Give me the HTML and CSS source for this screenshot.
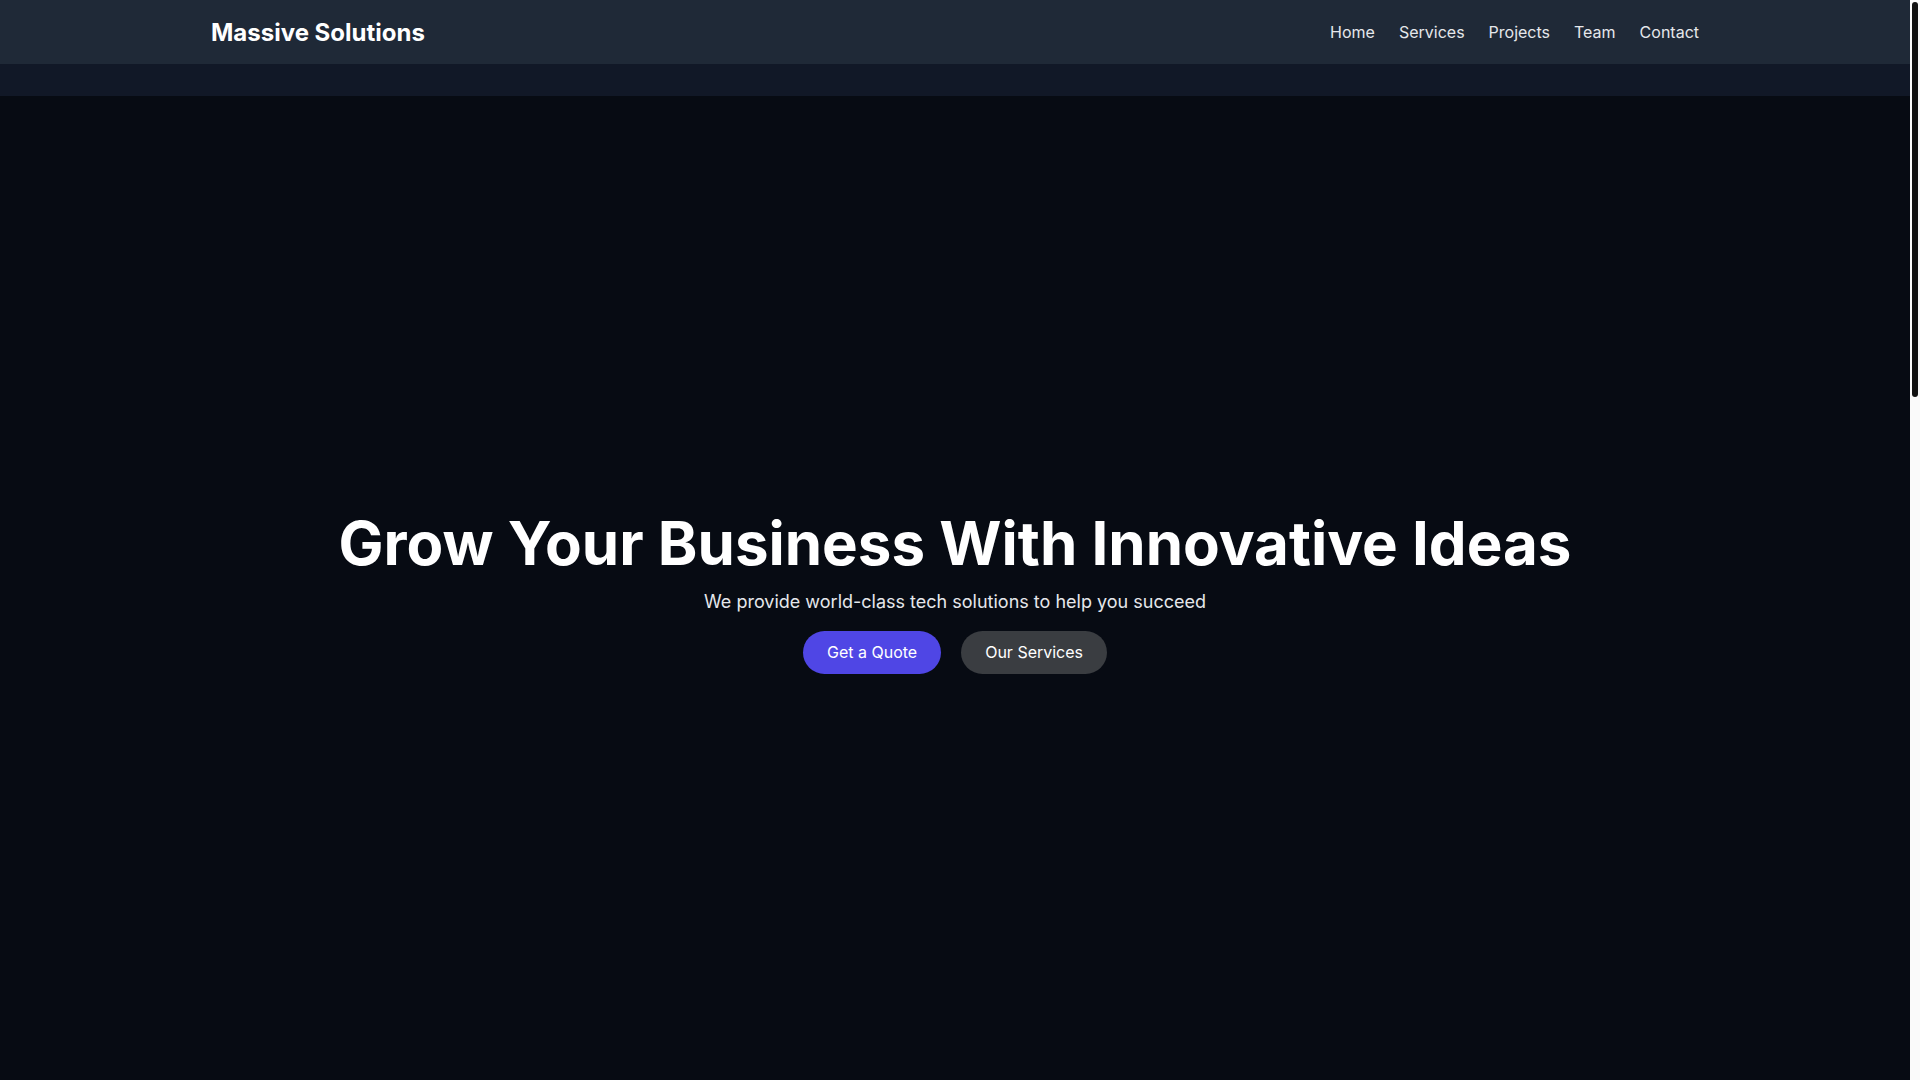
FILE: index.html
```html
<!DOCTYPE html>
<html lang="en">
<head>
<meta charset="utf-8">
<title>Massive Solutions</title>
<link rel="stylesheet" href="styles.css">
</head>
<body>
<div class="page">
  <header class="navbar">
    <div class="container nav-inner">
      <a class="brand" href="#">Massive Solutions</a>
      <nav class="nav-links">
        <a href="#">Home</a>
        <a href="#">Services</a>
        <a href="#">Projects</a>
        <a href="#">Team</a>
        <a href="#">Contact</a>
      </nav>
    </div>
  </header>
  <div class="band"></div>
  <main>
    <section class="hero">
      <h1 class="hero-title">Grow Your Business With Innovative Ideas</h1>
      <p class="hero-sub">We provide world-class tech solutions to help you succeed</p>
      <div class="hero-actions">
        <a class="btn btn-primary" href="#">Get a Quote</a>
        <a class="btn btn-secondary" href="#">Our Services</a>
      </div>
    </section>
    <section class="more"></section>
  </main>
</div>
<div class="scrollbar" aria-hidden="true"><div class="scrollbar-thumb"></div></div>
</body>
</html>
```

FILE: styles.css
```css
html, body {
  margin: 0;
  padding: 0;
}
body {
  background: #070b13;
  font-family: Inter, "Noto Sans", sans-serif;
  color: #fff;
  display: flex;
  align-items: flex-start;
}
.page {
  flex: 1;
  min-width: 0;
  background: #070b13;
}
.scrollbar {
  width: 10px;
  height: 100vh;
  position: sticky;
  top: 0;
  background: #fafafa;
  padding: 2px 2px 0;
  box-sizing: border-box;
}
.scrollbar-thumb {
  width: 6px;
  height: 395px;
  border-radius: 3px;
  background: #111111;
}
a {
  text-decoration: none;
  color: inherit;
}
.container {
  max-width: 1536px;
  margin: 0 auto;
  padding: 0 24px;
  box-sizing: border-box;
}
.navbar {
  background: #1f2937;
  height: 64px;
}
.nav-inner {
  height: 64px;
  display: flex;
  align-items: center;
  justify-content: space-between;
}
.brand {
  font-size: 24px;
  font-weight: 700;
  color: #fff;
}
.nav-links {
  display: flex;
  gap: 24px;
  font-size: 16px;
  color: #e5e7eb;
}
.band {
  height: 32px;
  background: #111827;
}
.hero {
  height: 984px;
  display: flex;
  flex-direction: column;
  align-items: center;
  justify-content: center;
  text-align: center;
}
.hero-title {
  margin: 0;
  padding-top: 4px;
  font-size: 60px;
  font-weight: 700;
  line-height: 72px;
  color: #fff;
}
.hero-sub {
  margin: 9px 0 0;
  font-size: 18px;
  line-height: 28px;
  color: #e5e7eb;
}
.hero-actions {
  margin-top: 15px;
  display: flex;
  gap: 20px;
}
.btn {
  padding: 10px 24px;
  border-radius: 9999px;
  font-size: 16px;
  line-height: 23px;
  color: #fff;
}
.btn-primary {
  background: #4f46e5;
}
.btn-secondary {
  background: #3a3d41;
}
.more {
  height: 1874px;
  background: #070b13;
}
```
